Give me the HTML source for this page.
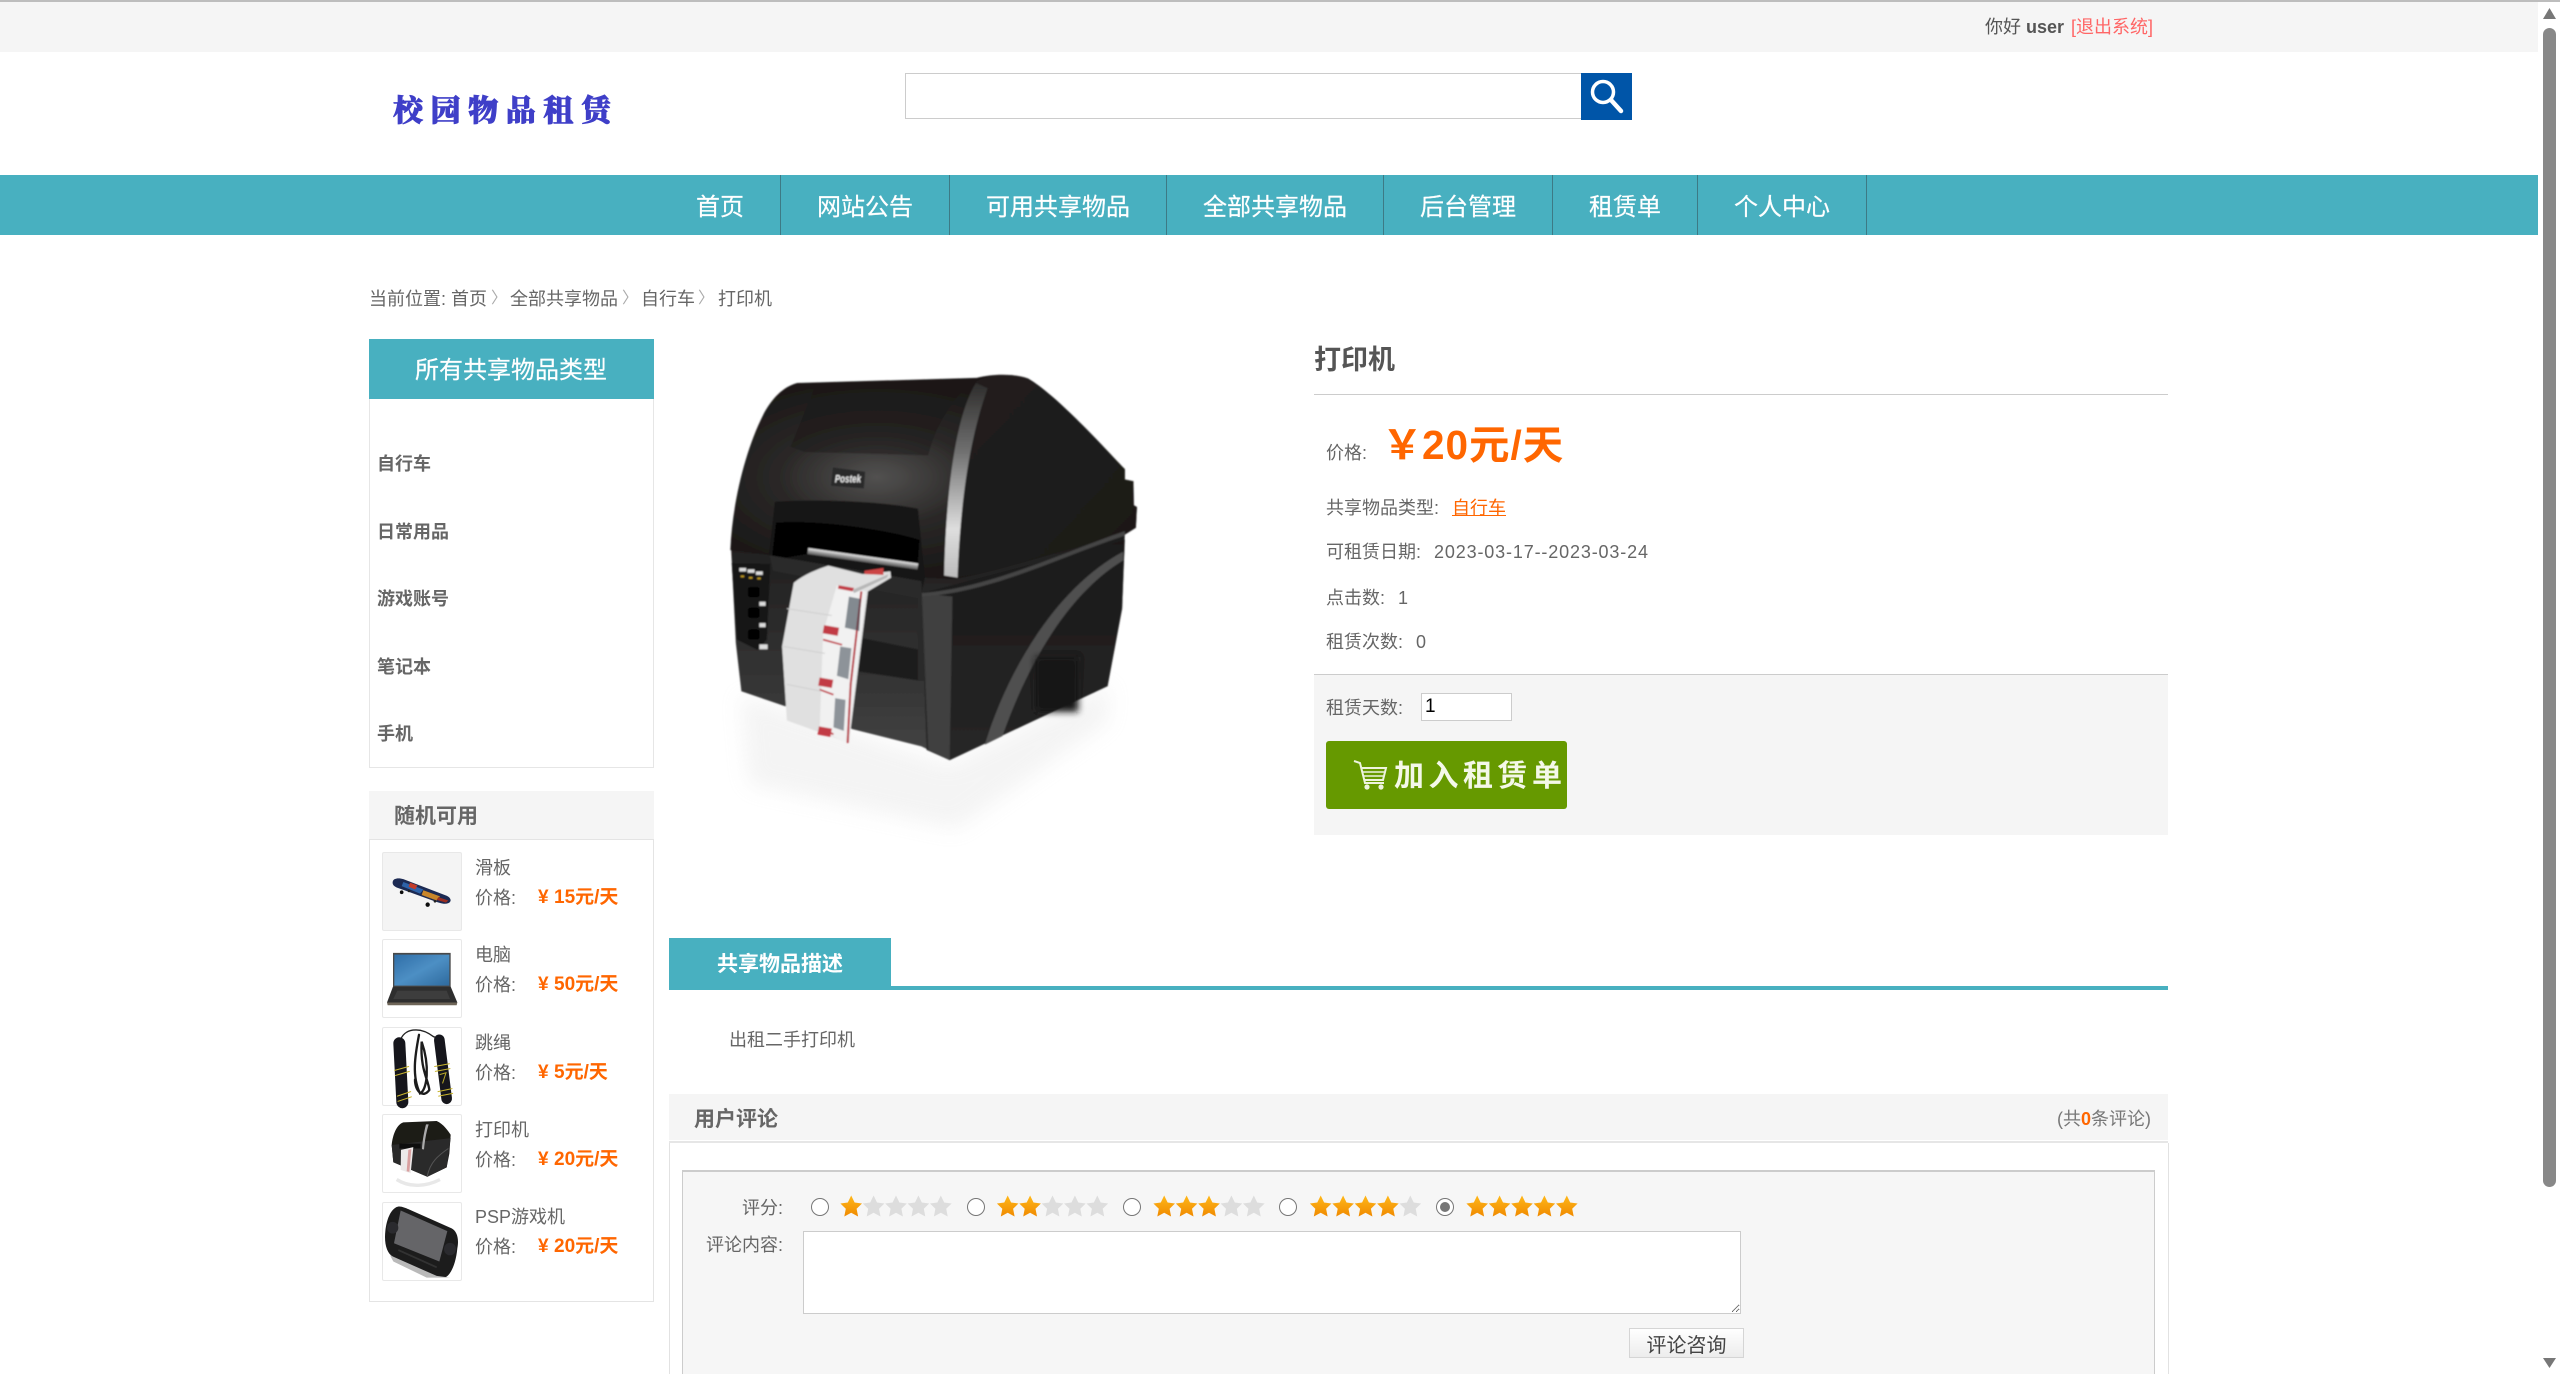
<!DOCTYPE html>
<html lang="zh-CN">
<head>
<meta charset="utf-8">
<title>校园物品租赁</title>
<style>
html,body{margin:0;padding:0;width:2560px;height:1374px;overflow:hidden;background:#fff}
body{position:relative;font-family:"Liberation Sans","Noto Sans CJK SC",sans-serif;font-size:18px;color:#666}
.a{position:absolute}
.t{position:absolute;white-space:nowrap;line-height:30px;height:30px;font-size:18px;color:#666}
.b{font-weight:bold}
.nav{position:absolute;top:175px;height:60px;width:1px;background:#3d7a85}
.n{position:absolute;top:178px;height:60px;line-height:60px;font-size:24px;color:#fff;white-space:nowrap;-webkit-text-stroke:.2px #fff}
.thumb{position:absolute;left:382px;width:78px;height:77px;border:1px solid #e8e8e8;border-radius:2px;background:#fff}
.p{color:#f60;font-weight:bold;font-size:19px}
.p i{display:inline-block;width:16px;font-style:normal}
.r{position:absolute;top:1198px;width:16px;height:16px;border:1.5px solid #767676;border-radius:50%;background:#fff}
svg{position:absolute;overflow:visible}
</style>
</head>
<body>
<!-- top bar -->
<div class="a" style="left:0;top:0;width:2560px;height:2px;background:#bdbdbd"></div>
<div class="a" style="left:0;top:2px;width:2538px;height:50px;background:#f5f5f5"></div>
<div class="t" style="left:1985px;top:12px;color:#555">你好 <b>user</b></div>
<div class="t" style="left:2071px;top:12px;color:#f66">[退出系统]</div>

<!-- logo -->
<div class="t" style="left:393px;top:95px;height:34px;line-height:34px;font-family:'Liberation Serif','Noto Serif CJK SC',serif;font-weight:900;font-size:30px;letter-spacing:7.6px;color:#3f3fc8;-webkit-text-stroke:.8px #3f3fc8">校园物品租赁</div>

<!-- search -->
<input class="a" type="text" style="left:905px;top:73px;width:676px;height:46px;box-sizing:border-box;border:1.5px solid #ccc;border-right:0;background:#fff;padding:0;margin:0">
<div class="a" style="left:1581px;top:73px;width:51px;height:47px;background:#0055a8"></div>
<svg style="left:1581px;top:73px" width="51" height="47" viewBox="0 0 51 47"><circle cx="22" cy="19" r="10.5" fill="none" stroke="#fff" stroke-width="3.5"/><path d="M30 27 L40 38" stroke="#fff" stroke-width="4.5" stroke-linecap="round"/></svg>

<!-- nav -->
<div class="a" style="left:0;top:175px;width:2538px;height:60px;background:#48b0c0"></div>
<div class="nav" style="left:780px"></div><div class="nav" style="left:949px"></div><div class="nav" style="left:1166px"></div><div class="nav" style="left:1383px"></div><div class="nav" style="left:1552px"></div><div class="nav" style="left:1697px"></div><div class="nav" style="left:1866px"></div>
<div class="n" style="left:696px">首页</div>
<div class="n" style="left:817px">网站公告</div>
<div class="n" style="left:986px">可用共享物品</div>
<div class="n" style="left:1203px">全部共享物品</div>
<div class="n" style="left:1420px">后台管理</div>
<div class="n" style="left:1589px">租赁单</div>
<div class="n" style="left:1734px">个人中心</div>

<!-- breadcrumb -->
<div class="t" style="left:369px;top:284px">当前位置: 首页</div>
<div class="t" style="left:491px;top:284px;color:#aaa;font-size:16px">〉</div>
<div class="t" style="left:510px;top:284px">全部共享物品</div>
<div class="t" style="left:622px;top:284px;color:#aaa;font-size:16px">〉</div>
<div class="t" style="left:641px;top:284px">自行车</div>
<div class="t" style="left:698px;top:284px;color:#aaa;font-size:16px">〉</div>
<div class="t" style="left:718px;top:284px">打印机</div>

<!-- sidebar -->
<div class="a" style="left:369px;top:339px;width:285px;height:60px;background:#48b0c0"></div>
<div class="t" style="left:415px;top:356px;color:#fff;font-size:24px;-webkit-text-stroke:.2px #fff">所有共享物品类型</div>
<div class="a" style="left:369px;top:399px;width:283px;height:368px;border:1px solid #e6e6e6;border-top:0"></div>
<div class="t b" style="left:377px;top:449px">自行车</div>
<div class="t b" style="left:377px;top:517px">日常用品</div>
<div class="t b" style="left:377px;top:584px">游戏账号</div>
<div class="t b" style="left:377px;top:652px">笔记本</div>
<div class="t b" style="left:377px;top:719px">手机</div>

<div class="a" style="left:369px;top:791px;width:285px;height:48px;background:#f5f5f5"></div>
<div class="t b" style="left:394px;top:802px;font-size:21px">随机可用</div>
<div class="a" style="left:369px;top:839px;width:283px;height:461px;border:1px solid #e4e4e4"></div>

<div class="thumb" style="top:852px;background:#f4f4f4"></div>
<div class="thumb" style="top:939px"></div>
<div class="thumb" style="top:1027px"></div>
<div class="thumb" style="top:1114px"></div>
<div class="thumb" style="top:1202px"></div>

<svg style="left:340px;top:780px" width="340" height="540" viewBox="0 0 1020 1568" preserveAspectRatio="none">
  <defs>
    <linearGradient id="scr" x1="0" y1="0" x2="1" y2="1"><stop offset="0" stop-color="#2f6ea8"/><stop offset=".5" stop-color="#4d8fc4"/><stop offset="1" stop-color="#2e6a9e"/></linearGradient>
    <filter id="soft"><feGaussianBlur stdDeviation=".9"/></filter>
  </defs>
  <g filter="url(#soft)">
  <!-- skateboard -->
  <g>
    <path d="M158 296 C160 284 178 284 190 288 L320 336 C334 342 336 354 324 358 C312 362 296 356 284 352 L170 312 C162 308 157 304 158 296Z" fill="#1b2a52"/>
    <path d="M190 296 L250 318 L240 330 L185 308Z" fill="#2e62a8"/>
    <path d="M250 320 L300 338 L290 350 L245 334Z" fill="#c9862a"/>
    <path d="M210 298 L232 306 L226 318 L206 310Z" fill="#c23a2c"/>
    <path d="M295 340 L325 350 L318 356 L290 348Z" fill="#9a2f22"/>
    <circle cx="185" cy="326" r="5.5" fill="#111"/><circle cx="263" cy="362" r="6.5" fill="#111"/><circle cx="207" cy="322" r="4" fill="#222"/><circle cx="285" cy="352" r="4" fill="#222"/>
  </g>
  <!-- laptop -->
  <g>
    <rect x="159" y="502" width="173" height="99" fill="#4a4a4a"/>
    <rect x="163" y="507" width="165" height="90" fill="url(#scr)"/>
    <path d="M159 600 L332 600 L352 646 L141 646Z" fill="#2f2f2f"/>
    <path d="M172 612 L320 612 L330 636 L160 636Z" fill="#3d3d3d"/>
    <path d="M141 646 L352 646 L350 654 L143 654Z" fill="#6e6558"/>
  </g>
  <!-- rope -->
  <g fill="none" stroke-linecap="round">
    <path d="M180 760 C190 720 240 715 280 745 C300 752 300 760 298 770" stroke="#222" stroke-width="4"/>
    <path d="M237 740 C225 800 215 860 240 910 C262 900 270 830 245 760 C240 840 265 870 268 900 C250 925 225 905 225 870" stroke="#1a1a1a" stroke-width="7"/>
    <path d="M178 765 L187 935" stroke="#15171c" stroke-width="36"/>
    <path d="M298 755 L320 925" stroke="#15171c" stroke-width="32"/>
    <path d="M164 843 L206 832 M166 858 L208 846 M172 918 L212 905 M174 933 L214 920" stroke="#c9b52f" stroke-width="3"/>
    <path d="M284 832 L328 824 M286 846 L330 838 M294 905 L336 896 M296 918 L338 910" stroke="#c9b52f" stroke-width="3"/>
    <path d="M300 855 L318 850 L308 880" stroke="#b8a82c" stroke-width="3"/>
  </g>
  <!-- thumb printer -->
  <g>
    <path d="M155 1060 C158 1030 170 1000 190 994 L290 990 C310 998 325 1020 332 1030 L328 1085 L320 1125 L262 1152 L160 1110 Z" fill="#1c1a19"/>
    <path d="M155 1060 L332 1040 L320 1125 L262 1152 L160 1110 Z" fill="#2b2a2a"/>
    <path d="M258 1000 C250 1030 246 1060 246 1072 L252 1073 C254 1050 258 1025 266 1000Z" fill="#aaa"/>
    <rect x="178" y="1056" width="64" height="14" fill="#0c0c0c"/>
    <path d="M183 1074 L220 1066 L212 1142 L182 1132Z" fill="#ece9e9"/>
    <path d="M205 1074 L214 1072 L208 1138 L200 1136Z" fill="#d9a0a0"/>
    <path d="M262 1150 C270 1110 295 1090 325 1070" stroke="#555" stroke-width="3" fill="none"/>
    <path d="M170 1160 C210 1185 260 1180 300 1160" stroke="#e8e8e8" stroke-width="10" fill="none"/>
  </g>
  <!-- psp -->
  <g>
    <path d="M170 1240 C180 1235 195 1242 205 1246 L335 1302 C350 1310 358 1330 352 1360 C348 1400 336 1430 320 1442 C305 1448 285 1442 265 1432 L160 1385 C140 1375 132 1345 136 1310 C140 1275 152 1248 170 1240Z" fill="#1d1d1f"/>
    <path d="M182 1250 L322 1310 L298 1398 L162 1345Z" fill="#656567"/>
    <path d="M150 1380 L290 1440 L330 1445 L260 1445 L160 1398Z" fill="#b9b9b9"/>
    <circle cx="158" cy="1300" r="17" fill="#2c2c2e"/><circle cx="330" cy="1362" r="18" fill="#2c2c2e"/>
    <path d="M175 1365 L290 1415" stroke="#333" stroke-width="5"/>
  </g>
  </g>
</svg>

<div class="t" style="left:475px;top:853px">滑板</div><div class="t" style="left:475px;top:883px">价格:</div><div class="t p" style="left:538px;top:883px"><i>¥</i>15元/天</div>
<div class="t" style="left:475px;top:940px">电脑</div><div class="t" style="left:475px;top:970px">价格:</div><div class="t p" style="left:538px;top:970px"><i>¥</i>50元/天</div>
<div class="t" style="left:475px;top:1028px">跳绳</div><div class="t" style="left:475px;top:1058px">价格:</div><div class="t p" style="left:538px;top:1058px"><i>¥</i>5元/天</div>
<div class="t" style="left:475px;top:1115px">打印机</div><div class="t" style="left:475px;top:1145px">价格:</div><div class="t p" style="left:538px;top:1145px"><i>¥</i>20元/天</div>
<div class="t" style="left:475px;top:1202px">PSP游戏机</div><div class="t" style="left:475px;top:1232px">价格:</div><div class="t p" style="left:538px;top:1232px"><i>¥</i>20元/天</div>

<!-- main printer image -->
<svg style="left:680px;top:340px" width="540" height="540" viewBox="0 0 1566 1568" preserveAspectRatio="none">
  <defs>
    <radialGradient id="top" cx="36%" cy="50%" r="48%"><stop offset="0" stop-color="#525150"/><stop offset=".5" stop-color="#2a2827"/><stop offset="1" stop-color="#1a1817"/></radialGradient>
    <linearGradient id="low" x1="0" y1="0" x2="0" y2="1"><stop offset="0" stop-color="#1d1c1c"/><stop offset=".7" stop-color="#363636"/><stop offset="1" stop-color="#454545"/></linearGradient>
    <linearGradient id="side" x1="0" y1="0" x2="1" y2="1"><stop offset="0" stop-color="#211f1e"/><stop offset="1" stop-color="#1a1817"/></linearGradient>
    <linearGradient id="sidel" x1="0" y1="0" x2="0" y2="1"><stop offset="0" stop-color="#1a1919"/><stop offset="1" stop-color="#262626"/></linearGradient>
    <linearGradient id="silver" x1="0" y1="0" x2="0" y2="1"><stop offset="0" stop-color="#2e2d2c"/><stop offset=".35" stop-color="#6f6f6f"/><stop offset=".75" stop-color="#dedede"/><stop offset="1" stop-color="#bbb"/></linearGradient>
    <linearGradient id="bar" x1="0" y1="0" x2="0" y2="1"><stop offset="0" stop-color="#eee"/><stop offset=".5" stop-color="#999"/><stop offset="1" stop-color="#555"/></linearGradient>
    <filter id="bl" x="-20%" y="-20%" width="140%" height="140%"><feGaussianBlur stdDeviation="30"/></filter>
    <filter id="sf"><feGaussianBlur stdDeviation="2"/></filter>
    <filter id="sf2" x="-30%" y="-30%" width="160%" height="160%"><feGaussianBlur stdDeviation="10"/></filter>
  </defs>
  <path d="M175 1030 L780 1230 L1245 1000 L1240 1110 L800 1420 L200 1290Z" fill="#c9c9c9" opacity=".2" filter="url(#bl)"/>
  <g filter="url(#sf)">
  <!-- lower body -->
  <path d="M148 600 L790 690 L1290 560 L1282 780 L1240 1005 L782 1220 L700 1180 L500 1130 L178 1020 L162 880Z" fill="url(#low)"/>
  <path d="M700 735 L1290 580 L1282 780 L1240 1005 L782 1220 L715 1190Z" fill="url(#sidel)"/>
  <path d="M700 735 L720 1190 L782 1220 L790 745Z" fill="#3f3f3f"/>
  <path d="M884 1175 C950 960 1090 720 1285 615 L1285 640 C1120 740 1005 950 935 1150Z" fill="#505050"/>
  <rect x="1030" y="920" width="125" height="160" fill="#161616" filter="url(#sf2)"/>
  <!-- upper cover -->
  <path d="M146 610 C152 470 190 320 240 220 C265 170 300 135 340 125 L860 110 C900 100 960 95 1010 112 C1090 160 1210 290 1290 375 L1290 405 L1315 410 L1316 480 L1325 485 L1322 545 L1290 565 C1120 605 950 665 795 695 L700 690 L260 625Z" fill="url(#top)"/>
  <path d="M860 120 C900 100 960 95 1010 112 C1090 160 1210 290 1290 375 L1290 405 L1315 410 L1316 480 L1325 485 L1322 545 L1290 565 C1120 605 950 665 795 690Z" fill="url(#side)"/>
  <path d="M320 310 L395 130 L860 112 C800 150 740 250 720 335 L360 325Z" fill="#1b1918" opacity=".45"/>
  <path d="M858 125 C800 220 772 430 766 684 L805 690 C812 480 838 290 892 140Z" fill="url(#silver)"/>
  <path d="M700 735 C900 720 1100 620 1290 555 L1290 568 C1100 630 900 735 700 745Z" fill="#444"/>
  <!-- slot -->
  <path d="M275 470 C400 460 600 470 690 490 L710 690 L700 735 L258 625Z" fill="#171514"/>
  <path d="M278 530 C400 520 600 550 695 580 L690 650 L380 620 L265 640Z" fill="#050505"/>
  <path d="M500 860 L700 900 L700 990 L500 960Z" fill="#1f1e1e"/>
  <path d="M260 625 L700 700 L712 990 L690 990 L690 750 L270 670Z" fill="#2a2a2a"/>
  <rect x="372" y="604" width="322" height="18" transform="rotate(8 372 604)" fill="url(#bar)"/>
  <!-- panel -->
  <path d="M150 648 L262 650 L252 870 L225 900 L165 870Z" fill="#171717"/>
  <rect x="172" y="662" width="20" height="10" fill="#ddd"/><rect x="196" y="666" width="20" height="10" fill="#ddd"/><rect x="220" y="672" width="20" height="10" fill="#ddd"/>
  <rect x="176" y="684" width="10" height="5" fill="#c8a020"/><rect x="200" y="688" width="10" height="5" fill="#c8a020"/><rect x="224" y="690" width="10" height="5" fill="#c8a020"/>
  <rect x="195" y="715" width="38" height="34" rx="10" fill="#050505" stroke="#333"/>
  <rect x="195" y="775" width="38" height="34" rx="10" fill="#050505" stroke="#333"/>
  <rect x="195" y="838" width="38" height="34" rx="10" fill="#050505" stroke="#333"/>
  <rect x="230" y="760" width="18" height="12" fill="#ddd"/><rect x="230" y="822" width="18" height="12" fill="#ddd"/><rect x="230" y="884" width="24" height="14" fill="#ddd"/>
  <!-- label -->
  <path d="M330 705 C360 680 400 665 430 655 L530 680 L610 672 L612 690 L545 730 L490 1170 L310 1105 L296 890Z" fill="#e0e0e0"/>
  <path d="M455 712 L540 730 L488 1170 L405 1135 L415 850Z" fill="#f1f1f1"/>
  <path d="M535 670 L590 662 L590 682 L535 680Z" fill="#c44"/>
  <path d="M500 726 L605 680 L600 690 L505 735Z" fill="#b7b7b7"/>
  <path d="M460 712 L505 720 L500 730 L458 722Z" fill="#c23a44"/>
  <path d="M526 730 L495 1000 L486 1170" stroke="#b83742" stroke-width="6" fill="none"/>
  <path d="M415 870 L470 885 M405 1015 L445 1030 M405 1125 L445 1145" stroke="#c23a44" stroke-width="5"/>
  <path d="M490 745 L525 752 L520 845 L478 835Z" fill="#3b4650" opacity=".6"/>
  <path d="M465 890 L497 895 L488 985 L455 975Z" fill="#3b4650" opacity=".55"/>
  <path d="M450 1040 L480 1045 L475 1135 L445 1125Z" fill="#3b4650" opacity=".55"/>
  <rect x="418" y="828" width="44" height="24" fill="#c23a44" transform="rotate(10 418 828)"/>
  <rect x="405" y="980" width="40" height="24" fill="#c23a44" transform="rotate(10 405 980)"/>
  <rect x="403" y="1122" width="38" height="24" fill="#c23a44" transform="rotate(10 403 1122)"/>
  <path d="M310 780 L440 800 M300 890 L420 910 M310 1000 L410 1020" stroke="#cfcfcf" stroke-width="3"/>
  <!-- badge -->
  <path d="M442 368 L538 382 L534 432 L436 425Z" fill="#2a2a2a" stroke="#555"/>
  <text x="449" y="414" font-family="Liberation Sans,sans-serif" font-weight="bold" font-style="italic" font-size="32" fill="#eee" textLength="76" lengthAdjust="spacingAndGlyphs">Postek</text>
  </g>
</svg>

<!-- product info -->
<div class="t b" style="left:1314px;top:345px;font-size:27px;color:#555">打印机</div>
<div class="a" style="left:1314px;top:394px;width:854px;height:1px;background:#ccc"></div>
<div class="t" style="left:1326px;top:438px">价格:</div>
<div class="t" style="left:1382px;top:422px;height:40px;line-height:40px;font-size:40.5px;font-weight:bold;color:#f60;letter-spacing:1px"><span style="display:inline-block;width:40px;font-family:'Noto Sans CJK SC',sans-serif;letter-spacing:0">￥</span>20元/天</div>
<div class="t" style="left:1326px;top:493px">共享物品类型:</div>
<div class="t" style="left:1452px;top:493px;color:#f60;text-decoration:underline">自行车</div>
<div class="t" style="left:1326px;top:537px">可租赁日期:</div>
<div class="t" style="left:1434px;top:537px;letter-spacing:.85px">2023-03-17--2023-03-24</div>
<div class="t" style="left:1326px;top:583px">点击数:</div><div class="t" style="left:1398px;top:583px">1</div>
<div class="t" style="left:1326px;top:627px">租赁次数:</div><div class="t" style="left:1416px;top:627px">0</div>

<div class="a" style="left:1314px;top:674px;width:854px;height:161px;background:#f5f5f5;border-top:1px solid #ccc;box-sizing:border-box"></div>
<div class="t" style="left:1326px;top:693px">租赁天数:</div>
<input class="a" type="text" value="1" style="left:1421px;top:693px;width:91px;height:28px;box-sizing:border-box;border:1px solid #ccc;background:#fff;margin:0;padding:0 0 0 3px;font-family:'Liberation Sans',sans-serif;font-size:19px;color:#000">
<div class="a" style="left:1326px;top:741px;width:241px;height:68px;border-radius:3px;background:#669900"></div>
<svg style="left:1350px;top:755px" width="40" height="40" viewBox="0 0 40 40"><path d="M4 6 L10 8 L15 28 L34 28" fill="none" stroke="#eef4df" stroke-width="2"/><path d="M11 13 L36 13 L33 25 L14 25" fill="none" stroke="#eef4df" stroke-width="2"/><path d="M13 17 L34 17 M14 21 L33 21" stroke="#eef4df" stroke-width="1.6"/><circle cx="17" cy="32" r="2.6" fill="#eef4df"/><circle cx="31" cy="32" r="2.6" fill="#eef4df"/></svg>
<div class="t b" style="left:1394px;top:758px;height:38px;line-height:38px;font-size:30px;letter-spacing:4.5px;color:#f4f8e8">加入租赁单</div>

<!-- description -->
<div class="a" style="left:669px;top:938px;width:222px;height:52px;background:#48b0c0"></div>
<div class="a" style="left:669px;top:986px;width:1499px;height:4px;background:#48b0c0"></div>
<div class="t b" style="left:717px;top:950px;font-size:21px;color:#fff">共享物品描述</div>
<div class="t" style="left:729px;top:1025px">出租二手打印机</div>

<!-- reviews -->
<div class="a" style="left:669px;top:1094px;width:1499px;height:46px;background:#f5f5f5"></div>
<div class="a" style="left:669px;top:1141px;width:1499px;height:2px;background:#e6e6e6"></div>
<div class="a" style="left:669px;top:1143px;width:1px;height:231px;background:#e2e2e2"></div>
<div class="a" style="left:2168px;top:1143px;width:1px;height:231px;background:#e2e2e2"></div>
<div class="t b" style="left:694px;top:1105px;font-size:21px;color:#666">用户评论</div>
<div class="t" style="left:2057px;top:1104px;color:#777">(共<b style="color:#f60">0</b>条评论)</div>

<div class="a" style="left:682px;top:1170px;width:1473px;height:220px;box-sizing:border-box;border:1px solid #ccc;border-top-width:2px;background:#f6f6f6"></div>
<div class="t" style="left:742px;top:1193px">评分:</div>
<div class="t" style="left:706px;top:1230px">评论内容:</div>

<div class="r" style="left:811px"></div>
<div class="r" style="left:967px"></div>
<div class="r" style="left:1123px"></div>
<div class="r" style="left:1279px"></div>
<div class="r" style="left:1436px"></div>
<div class="a" style="left:1440px;top:1202px;width:10px;height:10px;border-radius:50%;background:#767676"></div>

<svg style="left:0;top:0" width="2560" height="1374" viewBox="0 0 2560 1374">
  <defs>
    <linearGradient id="og" x1="0" y1="0" x2="0" y2="1"><stop offset="0" stop-color="#ffb81a"/><stop offset="1" stop-color="#f08a00"/></linearGradient>
    <path id="s" d="M11.2 0 L14.6 7 L22 8 L16.6 13.2 L18.1 21 L11.2 17.2 L4.3 21 L5.8 13.2 L.4 8 L7.8 7Z"/>
  </defs>
  <g transform="translate(840 1195.5)"><use href="#s" fill="url(#og)"/><use href="#s" x="22.4" fill="#ddd"/><use href="#s" x="44.8" fill="#ddd"/><use href="#s" x="67.2" fill="#ddd"/><use href="#s" x="89.6" fill="#ddd"/></g>
  <g transform="translate(996.5 1195.5)"><use href="#s" fill="url(#og)"/><use href="#s" x="22.4" fill="url(#og)"/><use href="#s" x="44.8" fill="#ddd"/><use href="#s" x="67.2" fill="#ddd"/><use href="#s" x="89.6" fill="#ddd"/></g>
  <g transform="translate(1153 1195.5)"><use href="#s" fill="url(#og)"/><use href="#s" x="22.4" fill="url(#og)"/><use href="#s" x="44.8" fill="url(#og)"/><use href="#s" x="67.2" fill="#ddd"/><use href="#s" x="89.6" fill="#ddd"/></g>
  <g transform="translate(1309.5 1195.5)"><use href="#s" fill="url(#og)"/><use href="#s" x="22.4" fill="url(#og)"/><use href="#s" x="44.8" fill="url(#og)"/><use href="#s" x="67.2" fill="url(#og)"/><use href="#s" x="89.6" fill="#ddd"/></g>
  <g transform="translate(1466 1195.5)"><use href="#s" fill="url(#og)"/><use href="#s" x="22.4" fill="url(#og)"/><use href="#s" x="44.8" fill="url(#og)"/><use href="#s" x="67.2" fill="url(#og)"/><use href="#s" x="89.6" fill="url(#og)"/></g>
</svg>

<textarea class="a" style="left:803px;top:1231px;width:938px;height:83px;box-sizing:border-box;border:1.5px solid #ccc;background:#fff;margin:0;padding:0"></textarea>
<button class="a" style="left:1629px;top:1328px;width:115px;height:30px;box-sizing:border-box;border:1.5px solid #d5d5d5;background:linear-gradient(#fff,#ececec);margin:0;padding:4px 0 0;font-family:'Liberation Sans','Noto Sans CJK SC',sans-serif;font-size:20px;line-height:26px;color:#444;overflow:hidden">评论咨询</button>

<!-- scrollbar -->
<div class="a" style="left:2538px;top:2px;width:22px;height:1372px;background:#fff"></div>
<div class="a" style="left:2543px;top:28px;width:13px;height:1159px;border-radius:7px;background:#888"></div>
<svg style="left:2543px;top:8px" width="13" height="11" viewBox="0 0 13 11"><path d="M6.5 0 L13 11 L0 11Z" fill="#777"/></svg>
<svg style="left:2543px;top:1358px" width="13" height="10" viewBox="0 0 13 10"><path d="M0 0 L13 0 L6.5 10Z" fill="#777"/></svg>
</body>
</html>
